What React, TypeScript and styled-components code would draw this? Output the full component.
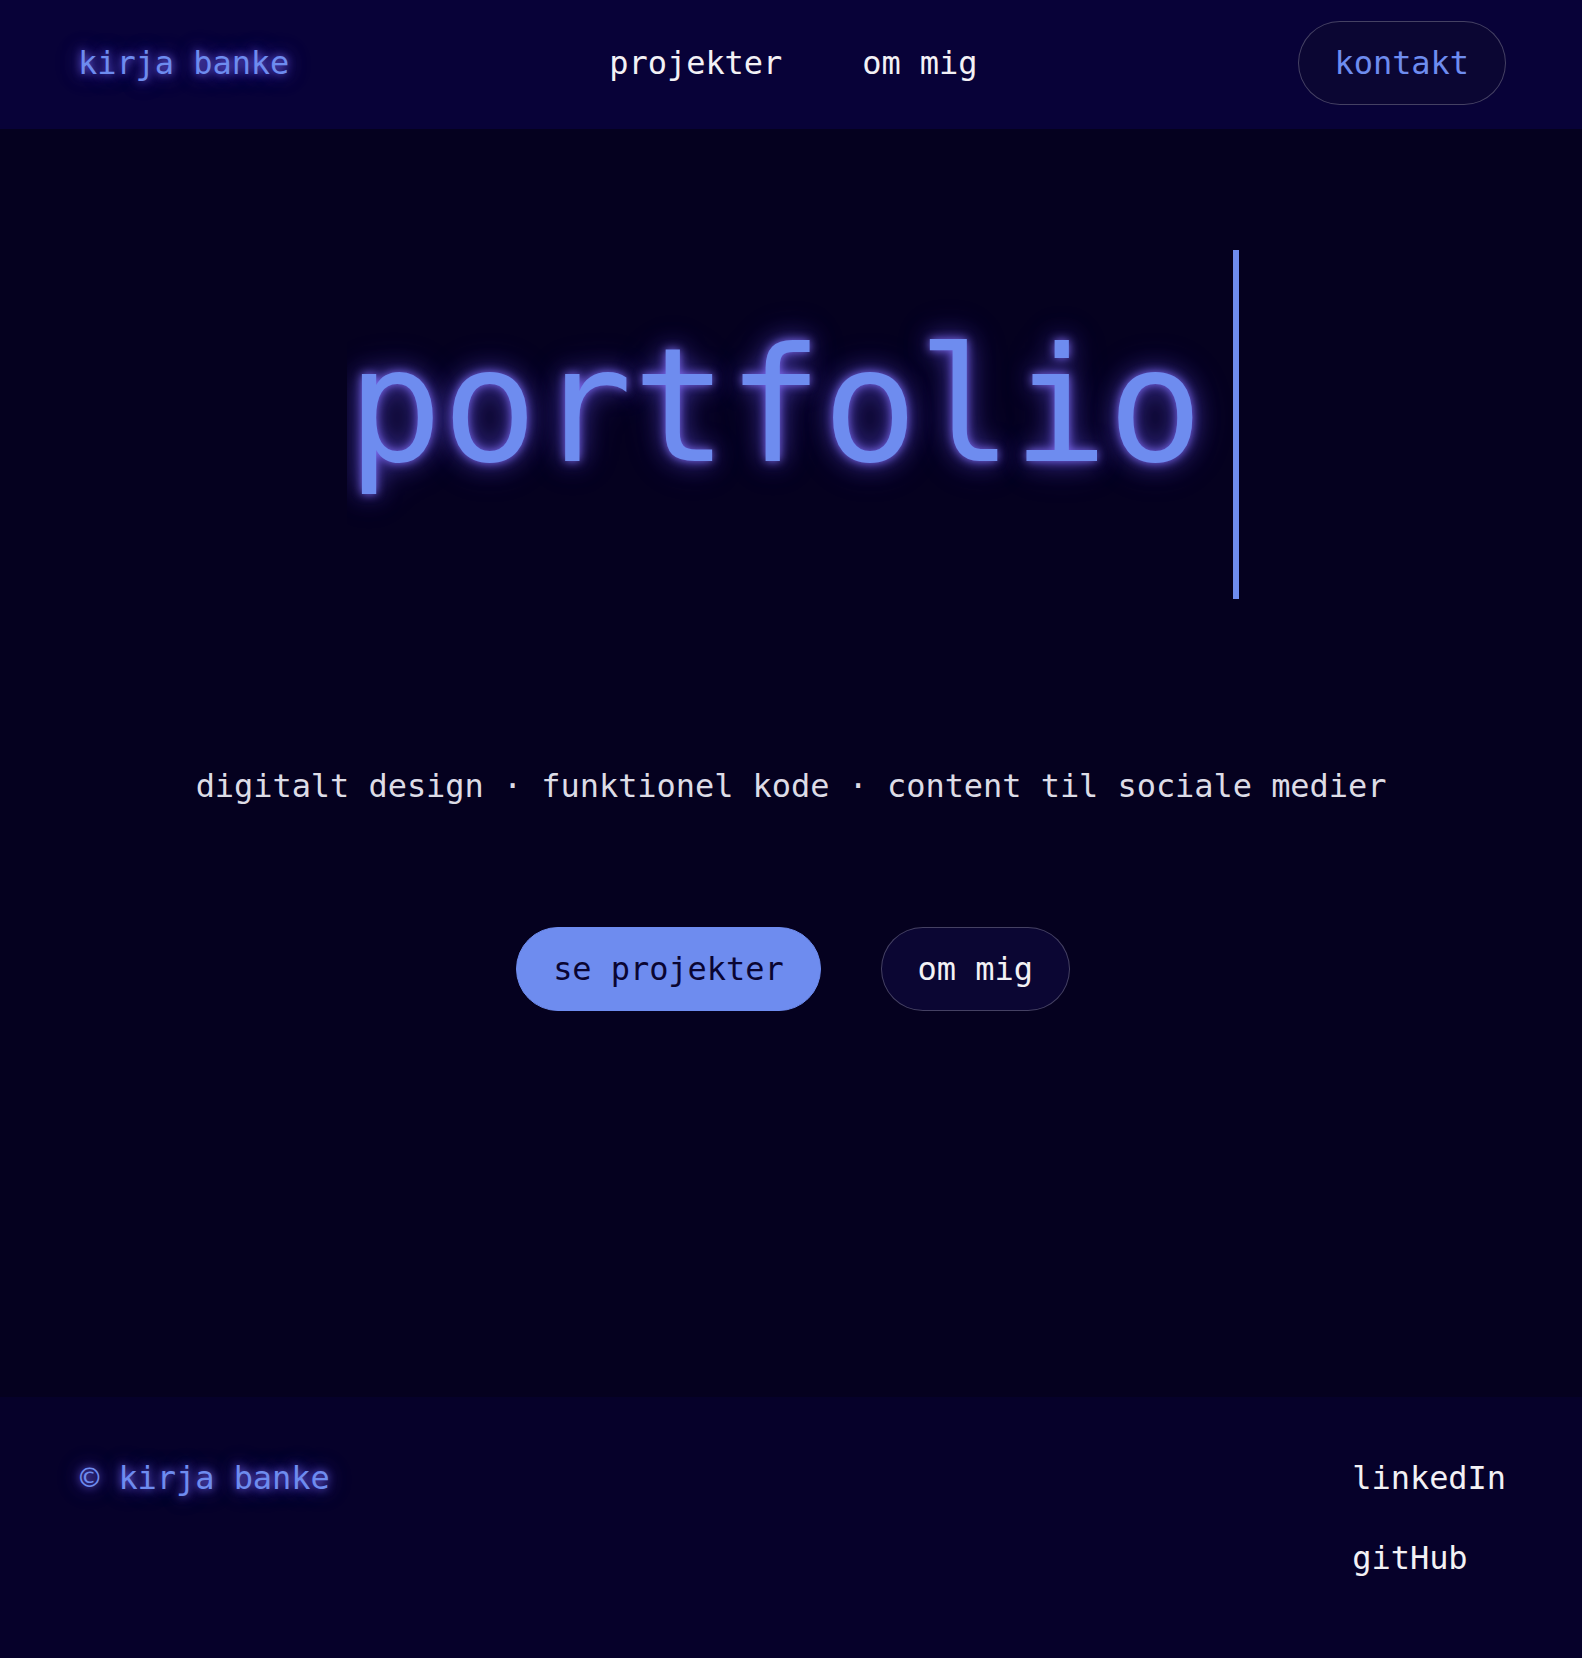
import React from "react";
import styled, { createGlobalStyle } from "styled-components";

const GlobalStyle = createGlobalStyle`
  html, body {
    margin: 0;
    padding: 0;
    background: #05011f;
  }
  * { box-sizing: border-box; }
  body {
    font-family: "DejaVu Sans Mono", "Liberation Mono", monospace;
    color: #f1eff4;
    letter-spacing: -0.06px;
  }
`;

const glow = `0 0 8px rgba(125, 110, 255, 0.85), 0 0 18px rgba(110, 95, 255, 0.55), 0 0 30px rgba(100, 90, 255, 0.3)`;

const Page = styled.div`
  min-height: 100vh;
  display: flex;
  flex-direction: column;
  background: #05011f;
`;

const Header = styled.header`
  height: 129px;
  padding: 0 76px 4px 78px;
  display: flex;
  align-items: center;
  justify-content: space-between;
  background: #080238;
`;

const Logo = styled.a`
  font-size: 32px;
  line-height: 1.5;
  color: #6e8cef;
  text-decoration: none;
  text-shadow: ${glow};
`;

const Nav = styled.nav`
  display: flex;
  gap: 80px;
`;

const NavLink = styled.a`
  font-size: 32px;
  line-height: 1.5;
  color: #f3f1f5;
  text-decoration: none;
`;

const PillButton = styled.a<{ $variant: "primary" | "ghost" | "accent" }>`
  display: inline-flex;
  align-items: center;
  justify-content: center;
  font-size: 32px;
  line-height: 1.5;
  padding: 17px 36px;
  border-radius: 999px;
  text-decoration: none;
  border: 1px solid
    ${(p) => (p.$variant === "primary" ? "#6e8cef" : "rgba(255, 255, 255, 0.24)")};
  background: ${(p) => (p.$variant === "primary" ? "#6e8cef" : "#0b0633")};
  color: ${(p) =>
    p.$variant === "primary" ? "#0a0532" : p.$variant === "accent" ? "#6e8cef" : "#f3f1f5"};
`;

const Main = styled.main`
  flex: 1;
  display: flex;
  flex-direction: column;
  align-items: center;
  padding-top: 121px;
`;

const Title = styled.h1`
  margin: 0 0 0 4px;
  display: inline-block;
  overflow: hidden;
  white-space: nowrap;
  font-size: 158px;
  font-weight: 400;
  line-height: 1.2;
  padding: 62px 30px 97px 0;
  color: #6e8cef;
  border-right: 6px solid #6e8cef;
  text-shadow: 0 0 10px rgba(135, 115, 255, 0.9), 0 0 24px rgba(115, 95, 255, 0.6),
    0 0 40px rgba(100, 85, 255, 0.3);
`;

const Tagline = styled.p`
  margin: 163px 0 0;
  font-size: 32px;
  line-height: 1.5;
  color: #dddce6;
  white-space: nowrap;
`;

const Actions = styled.div`
  margin-top: 117px;
  margin-left: 4px;
  display: flex;
  gap: 60px;
`;

const Footer = styled.footer`
  height: 261px;
  padding: 57px 76px 0 80px;
  display: flex;
  justify-content: space-between;
  align-items: flex-start;
  background: #06012a;
`;

const Copyright = styled.p`
  margin: 0;
  font-size: 32px;
  line-height: 1.5;
  color: #6e8cef;
  text-shadow: ${glow};
`;

const SocialList = styled.ul`
  margin: 0;
  padding: 0;
  list-style: none;
  display: flex;
  flex-direction: column;
  gap: 32px;
`;

const SocialLink = styled.a`
  font-size: 32px;
  line-height: 1.5;
  color: #f3f1f5;
  text-decoration: none;
`;

export default function App() {
  return (
    <>
      <GlobalStyle />
      <Page>
        <Header>
          <Logo href="#">kirja banke</Logo>
          <Nav>
            <NavLink href="#">projekter</NavLink>
            <NavLink href="#">om mig</NavLink>
          </Nav>
          <PillButton $variant="accent" href="#">kontakt</PillButton>
        </Header>
        <Main>
          <Title>portfolio</Title>
          <Tagline>digitalt design · funktionel kode · content til sociale medier</Tagline>
          <Actions>
            <PillButton $variant="primary" href="#">se projekter</PillButton>
            <PillButton $variant="ghost" href="#">om mig</PillButton>
          </Actions>
        </Main>
        <Footer>
          <Copyright>© kirja banke</Copyright>
          <SocialList>
            <li><SocialLink href="#">linkedIn</SocialLink></li>
            <li><SocialLink href="#">gitHub</SocialLink></li>
          </SocialList>
        </Footer>
      </Page>
    </>
  );
}
